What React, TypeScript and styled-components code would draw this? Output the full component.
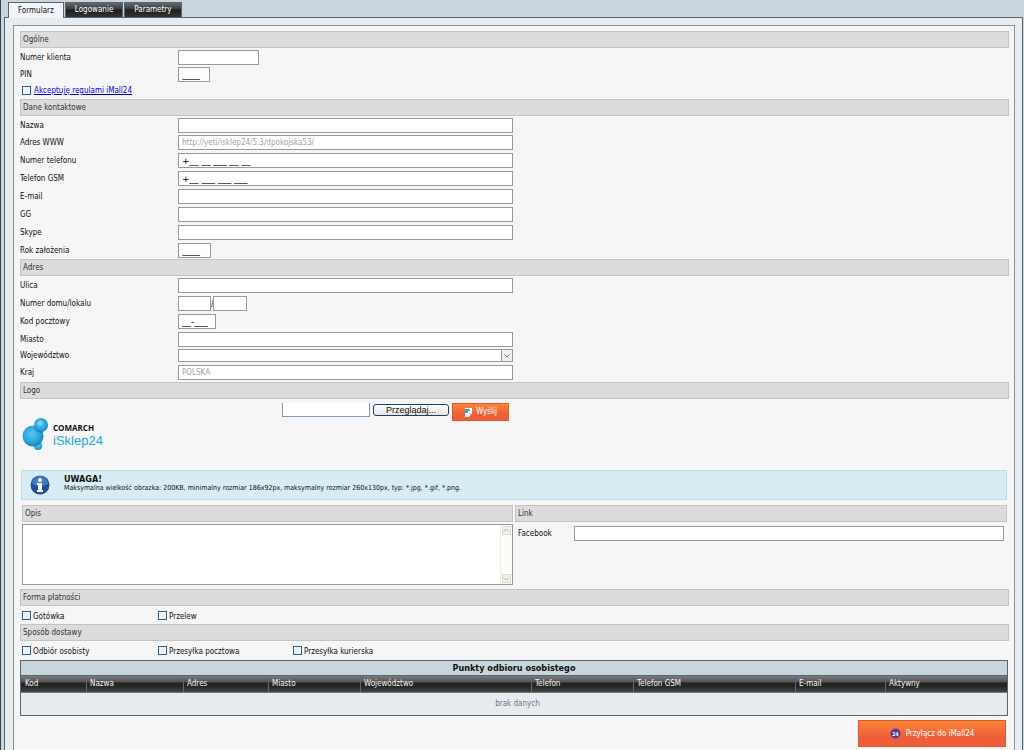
import React from "react";
import styled, { createGlobalStyle, css } from "styled-components";

const GlobalStyle = createGlobalStyle`
  *, *::before, *::after { box-sizing: border-box; }
  body {
    margin: 0;
    background: #c9d5dc;
    color: #111;
    font-family: "DejaVu Sans Condensed", "DejaVu Sans", sans-serif;
    font-size: 8px;
    line-height: 12px;
  }
  button, input, select, textarea { font: inherit; color: inherit; margin: 0; }
`;

const Page = styled.div`
  display: flex;
  flex-direction: column;
  min-height: 100vh;
  padding: 2px 1px 0 3px;
  border-left: 1px solid #3c3f48;
`;

const TabBar = styled.nav`
  display: flex;
  gap: 1px;
  height: 15px;
  padding-left: 4px;
`;

const Tab = styled.button<{ $active?: boolean }>`
  height: 15px;
  padding: 0 9px;
  border: 1px solid #59646b;
  border-bottom: 0;
  background: linear-gradient(#66686a 0, #3c3d3f 40%, #1e1f20 50%, #333 100%);
  color: #fff;
  ${(p) =>
    p.$active &&
    css`
      position: relative;
      height: 16px;
      background: #f1f5f7;
      color: #111;
    `}
`;

const Panel = styled.main`
  flex: 1;
  display: flex;
  flex-direction: column;
  padding: 7px 7px 0 8px;
  border: 1px solid #59646b;
  border-bottom: 0;
  background: #e6ecef;
`;

const Form = styled.form`
  flex: 1;
  padding: 5px 5px 2px 6px;
  border: 1px solid #8c9294;
  border-bottom: 0;
  background: #f6f6f6;
`;

const Heading = styled.h2`
  height: 17px;
  margin: 0;
  padding: 0 2px;
  border: 1px solid #c3c3c3;
  background: #dcdcdc;
  color: #333;
  font-size: 8px;
  font-weight: normal;
  line-height: 16px;
`;

type Edge = "first" | "last";

const Row = styled.div<{ $edge?: Edge }>`
  display: flex;
  align-items: flex-end;
  height: ${(p) => (p.$edge ? 17 : 18)}px;
  padding-bottom: ${(p) => (p.$edge === "first" ? 0 : p.$edge === "last" ? 2 : 1)}px;
`;

const Label = styled.label`
  width: 158px;
  line-height: 14px;
`;

const inputBox = css`
  height: 15px;
  padding: 0 3px;
  border: 1px solid #999;
  border-radius: 0;
  background: #fff;
  outline: none;
`;

const TextInput = styled.input<{ $width?: number; $mask?: boolean }>`
  ${inputBox}
  width: ${(p) => p.$width ?? 335}px;
  ${(p) =>
    p.$mask &&
    css`
      font-family: "DejaVu Sans", sans-serif;
      font-size: 9px;
      color: #000;
    `}
  &:disabled { color: #a3a3a3; background: #fff; }
`;

const SelectWrap = styled.span`
  display: flex;
  width: 335px;
  height: 14px;
  position: relative;
  svg { position: absolute; right: 0; top: 0; pointer-events: none; }
`;

const Select = styled.select`
  ${inputBox}
  width: 100%;
  height: 13px;
  appearance: none;
`;

const Terms = styled.div`
  display: flex;
  align-items: center;
  gap: 3px;
  height: 17px;
  padding-left: 2px;
  a { padding-top: 1px; color: #0000e8; text-decoration: underline; }
`;

const Check = styled.input`
  appearance: none;
  flex: none;
  width: 9px;
  height: 9px;
  border: 1px solid #2f5f8c;
  background: #eef4f8;
  &:checked { background: #2f5f8c; }
`;

const Checks = styled.div`
  display: grid;
  grid-template-columns: 136px 135px 135px;
  height: 18px;
  padding: 3px 0 0 2px;
`;

const CheckLabel = styled.label`
  display: flex;
  align-items: center;
  gap: 2px;
  height: 13px;
  span { padding-top: 2px; }
`;

const LogoArea = styled.div`
  display: flex;
  height: 71px;
  padding: 4px 0 0 2px;
`;

const Logo = styled.div`
  display: flex;
  gap: 4px;
  width: 260px;
  padding-top: 15px;
`;

const LogoText = styled.div`
  display: flex;
  flex-direction: column;
  padding-top: 6px;
  font-family: "Liberation Sans", Arial, sans-serif;
  font-size: 13px;
  line-height: 18px;
  color: #18a5dc;
  strong {
    font-family: "Open Sans", sans-serif;
    font-size: 8px;
    line-height: 8px;
    color: #111;
  }
`;

const Upload = styled.div`
  display: flex;
  align-items: flex-start;
  gap: 3px;
`;

const FileName = styled.input`
  width: 88px;
  height: 14px;
  padding: 0 3px;
  border: 1px solid #7f9db9;
  border-top: 0;
  background: #fff;
`;

const Browse = styled.button`
  width: 76px;
  height: 12px;
  margin-top: 1px;
  padding: 0;
  border: 1px solid #1c3f6e;
  border-radius: 3px;
  background: linear-gradient(#fff, #e6e5de);
  color: #111;
  font-family: "Liberation Sans", Arial, sans-serif;
  font-size: 9px;
  line-height: 10px;
`;

const OrangeButton = styled.button<{ $large?: boolean }>`
  display: flex;
  align-items: center;
  justify-content: center;
  gap: ${(p) => (p.$large ? 5 : 3)}px;
  width: ${(p) => (p.$large ? 148 : 57)}px;
  height: ${(p) => (p.$large ? 27 : 18)}px;
  padding: 0;
  border: 1px solid #dd5a2c;
  background: linear-gradient(#fb8534, #ee5e3a 65%);
  color: #fff;
`;

const Notice = styled.section`
  display: flex;
  align-items: center;
  gap: 14px;
  height: 30px;
  margin: 0 2px 5px 1px;
  padding-left: 8px;
  border: 1px solid #bcdfe6;
  background: #d7edf3;
  color: #111;
  font-size: 7px;
  line-height: 9px;
  div { padding-bottom: 4px; }
  strong { display: block; font-size: 9px; line-height: 10px; }
`;

const Columns = styled.div`
  display: grid;
  grid-template-columns: 491px 1fr;
  gap: 2px;
  height: 84px;
  margin: 0 2px;
`;

const AreaBox = styled.div`
  display: flex;
  height: 61px;
  margin-top: 2px;
  border: 1px solid #999;
  background: #fff;
`;

const TextArea = styled.textarea`
  flex: 1;
  padding: 2px;
  border: 0;
  outline: none;
  resize: none;
  background: transparent;
`;

const ScrollTrack = styled.div`
  display: flex;
  flex-direction: column;
  justify-content: space-between;
  width: 12px;
  border-left: 1px solid #eeeee6;
  background: #fcfcf9;
`;

const LinkRow = styled.div`
  display: flex;
  align-items: center;
  padding: 4px 3px 0;
  label { width: 56px; padding-top: 1px; }
  input { ${inputBox} flex: 1; min-width: 0; }
`;

const Table = styled.table`
  width: calc(100% - 1px);
  margin-top: 1px;
  border: 1px solid #59646b;
  border-spacing: 0;
  table-layout: fixed;
  caption {
    height: 15px;
    border: 1px solid #59646b;
    border-bottom: 0;
    background: #c9d5dc;
    font-size: 9px;
    font-weight: bold;
    line-height: 14px;
  }
  thead tr { background: linear-gradient(#7c7c7c 0, #555 35%, #232323 45%, #262626 65%, #454545 100%); }
  th {
    height: 16px;
    padding: 0 3px;
    border-left: 1px solid #666;
    color: #f4f4f4;
    font-weight: normal;
    line-height: 14px;
    text-align: left;
  }
  th:first-child { border-left: 0; padding-left: 4px; }
  td {
    height: 23px;
    padding: 0 0 1px 7px;
    border-top: 1px solid #777;
    background: #e6ebf0;
    color: #777;
    text-align: center;
  }
`;

const Actions = styled.div`
  display: flex;
  justify-content: flex-end;
  padding: 4px 3px 0 0;
`;

type FieldProps = {
  id: string;
  label: string;
  value?: string;
  width?: number;
  mask?: boolean;
  edge?: Edge;
  disabled?: boolean;
};

const Field = ({ id, label, value, width, mask, edge, disabled }: FieldProps) => (
  <Row $edge={edge}>
    <Label htmlFor={id}>{label}</Label>
    <TextInput id={id} defaultValue={value} $width={width} $mask={mask} disabled={disabled} />
  </Row>
);

const CheckItem = ({ label }: { label: string }) => (
  <CheckLabel>
    <Check type="checkbox" />
    <span>{label}</span>
  </CheckLabel>
);

const LogoMark = () => (
  <svg width="27" height="34" viewBox="0 0 27 34" aria-hidden="true">
    <defs>
      <radialGradient id="bubble" cx="45%" cy="40%" r="60%">
        <stop offset="0" stopColor="#5cc6ee" />
        <stop offset="0.7" stopColor="#27a3da" />
        <stop offset="1" stopColor="#1683bd" />
      </radialGradient>
    </defs>
    <circle cx="16" cy="28" r="4" fill="url(#bubble)" />
    <circle cx="11" cy="18" r="10.5" fill="url(#bubble)" />
    <circle cx="19" cy="7" r="7" fill="url(#bubble)" />
    <path d="M13 10a7 7 0 0 0 8 4" fill="none" stroke="#1278b0" />
    <ellipse cx="18" cy="5" rx="3" ry="2" fill="#a5e0f6" opacity="0.6" />
  </svg>
);

const InfoIcon = () => (
  <svg width="20" height="20" viewBox="0 0 20 20" aria-hidden="true">
    <circle cx="10" cy="10" r="9.5" fill="#1d4f93" />
    <path d="M2 9a8 8 0 0 1 16 0q-8 4-16 0z" fill="#3c7dc0" />
    <circle cx="10" cy="5" r="2" fill="#fff" />
    <path d="M7 8h5v7h1v2H7v-2h1v-5H7z" fill="#fff" />
  </svg>
);

const SendIcon = () => (
  <svg width="9" height="9" viewBox="0 0 9 9" aria-hidden="true">
    <path d="M1 0h7v5L5 9H1z" fill="#fff" />
    <path d="M1 1h5v2H4v2H1z" fill="#3aa5c8" />
    <path d="M8 5H5v4z" fill="#d5dde0" />
  </svg>
);

const BadgeIcon = () => (
  <svg width="11" height="11" viewBox="0 0 11 11" aria-hidden="true">
    <circle cx="5.5" cy="5.5" r="5" fill="#5a3a94" />
    <text x="5.5" y="7.5" fill="#fff" fontSize="5" fontWeight="bold" textAnchor="middle">24</text>
  </svg>
);

const ScrollArrow = ({ down }: { down?: boolean }) => (
  <svg width="11" height="11" viewBox="0 0 11 11" aria-hidden="true">
    <rect x="1.5" y="1.5" width="8" height="8" fill="#f1f1e8" stroke="#deded0" />
    <path d={down ? "M3 4.5L5.5 7 8 4.5" : "M3 6.5L5.5 4 8 6.5"} fill="none" stroke="#b8b8a8" />
  </svg>
);

const columns: [string, number][] = [
  ["Kod", 65],
  ["Nazwa", 97],
  ["Adres", 85],
  ["Miasto", 92],
  ["Województwo", 171],
  ["Telefon", 102],
  ["Telefon GSM", 162],
  ["E-mail", 90],
  ["Aktywny", 0],
];

export default function App() {
  return (
    <Page>
      <GlobalStyle />
      <TabBar>
        <Tab type="button" $active>Formularz</Tab>
        <Tab type="button">Logowanie</Tab>
        <Tab type="button">Parametry</Tab>
      </TabBar>
      <Panel>
        <Form onSubmit={(e) => e.preventDefault()}>
          <Heading>Ogólne</Heading>
          <Field id="client" label="Numer klienta" width={81} edge="first" />
          <Field id="pin" label="PIN" width={32} value="____" mask edge="first" />
          <Terms>
            <Check type="checkbox" aria-label="Akceptuję regulamin" />
            <a href="#regulamin">Akceptuję regulami iMall24</a>
          </Terms>

          <Heading>Dane kontaktowe</Heading>
          <Field id="name" label="Nazwa" edge="first" />
          <Field id="www" label="Adres WWW" value="http://yeti/isklep24/5.3/dpokojska53/" disabled />
          <Field id="phone" label="Numer telefonu" value="+__ __ ___ __ __" mask />
          <Field id="gsm" label="Telefon GSM" value="+__ ___ ___ ___" mask />
          <Field id="email" label="E-mail" />
          <Field id="gg" label="GG" />
          <Field id="skype" label="Skype" />
          <Field id="year" label="Rok założenia" width={33} value="____" mask />

          <Heading>Adres</Heading>
          <Field id="street" label="Ulica" />
          <Row>
            <Label htmlFor="house">Numer domu/lokalu</Label>
            <TextInput id="house" $width={33} />
            <span>/</span>
            <TextInput aria-label="Numer lokalu" $width={34} />
          </Row>
          <Field id="zip" label="Kod pocztowy" width={38} value="__-___" mask />
          <Field id="city" label="Miasto" />
          <Row $edge="last">
            <Label htmlFor="region">Województwo</Label>
            <SelectWrap>
              <Select id="region" />
              <svg width="12" height="13" viewBox="0 0 12 13" aria-hidden="true">
                <rect x="0.5" y="0.5" width="11" height="12" fill="#f0f0f0" stroke="#999" />
                <path d="M3.5 5.5L6 8 8.5 5.5" fill="none" stroke="#777" />
              </svg>
            </SelectWrap>
          </Row>
          <Field id="country" label="Kraj" value="POLSKA" edge="last" disabled />

          <Heading>Logo</Heading>
          <LogoArea>
            <Logo>
              <LogoMark />
              <LogoText>
                <strong>COMARCH</strong>
                iSklep24
              </LogoText>
            </Logo>
            <Upload>
              <FileName type="text" aria-label="Plik logo" />
              <Browse type="button">Przeglądaj...</Browse>
              <OrangeButton type="button">
                <SendIcon />
                Wyślij
              </OrangeButton>
            </Upload>
          </LogoArea>
          <Notice>
            <InfoIcon />
            <div>
              <strong>UWAGA!</strong>
              Maksymalna wielkość obrazka: 200KB, minimalny rozmiar 186x92px, maksymalny rozmiar 260x130px, typ: *.jpg, *.gif, *.png.
            </div>
          </Notice>
          <Columns>
            <div>
              <Heading>Opis</Heading>
              <AreaBox>
                <TextArea aria-label="Opis" />
                <ScrollTrack>
                  <ScrollArrow />
                  <ScrollArrow down />
                </ScrollTrack>
              </AreaBox>
            </div>
            <div>
              <Heading>Link</Heading>
              <LinkRow>
                <label htmlFor="facebook">Facebook</label>
                <input id="facebook" />
              </LinkRow>
            </div>
          </Columns>

          <Heading>Forma płatności</Heading>
          <Checks>
            <CheckItem label="Gotówka" />
            <CheckItem label="Przelew" />
          </Checks>
          <Heading>Sposób dostawy</Heading>
          <Checks>
            <CheckItem label="Odbiór osobisty" />
            <CheckItem label="Przesyłka pocztowa" />
            <CheckItem label="Przesyłka kurierska" />
          </Checks>

          <Table>
            <caption>Punkty odbioru osobistego</caption>
            <colgroup>
              {columns.map(([name, width]) => (
                <col key={name} width={width || undefined} />
              ))}
            </colgroup>
            <thead>
              <tr>
                {columns.map(([name]) => (
                  <th key={name} scope="col">{name}</th>
                ))}
              </tr>
            </thead>
            <tbody>
              <tr>
                <td colSpan={columns.length}>brak danych</td>
              </tr>
            </tbody>
          </Table>
          <Actions>
            <OrangeButton type="submit" $large>
              <BadgeIcon />
              Przyłącz do iMall24
            </OrangeButton>
          </Actions>
        </Form>
      </Panel>
    </Page>
  );
}
